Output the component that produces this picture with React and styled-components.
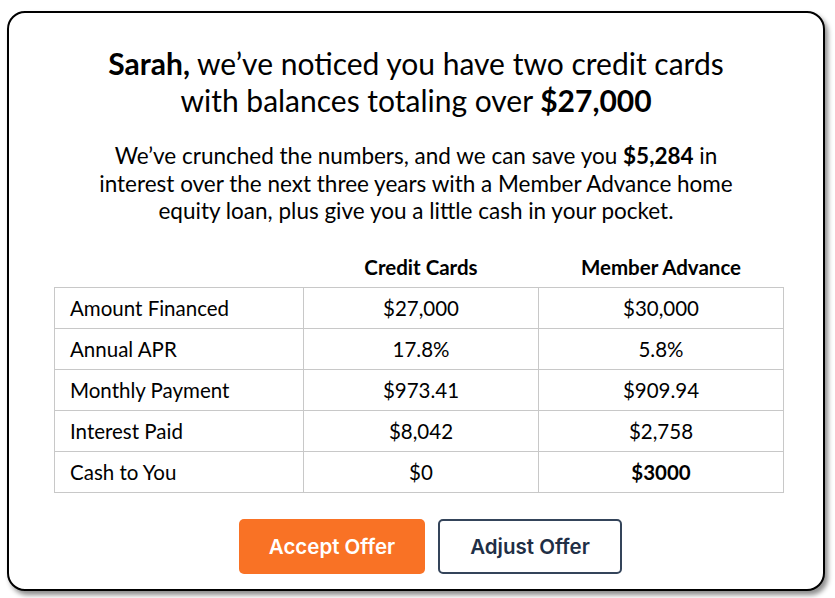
import React from "react";
import styled, { createGlobalStyle } from "styled-components";

const GlobalStyle = createGlobalStyle`
  html, body {
    margin: 0;
    padding: 0;
    background: #fff;
  }
`;

const rows = [
  { label: "Amount Financed", cards: "$27,000", advance: "$30,000" },
  { label: "Annual APR", cards: "17.8%", advance: "5.8%" },
  { label: "Monthly Payment", cards: "$973.41", advance: "$909.94" },
  { label: "Interest Paid", cards: "$8,042", advance: "$2,758" },
  { label: "Cash to You", cards: "$0", advance: "$3000", strong: true },
];

function App() {
  return (
    <Page>
      <GlobalStyle />
      <Card>
        <Title>
          <b>Sarah,</b> we’ve noticed you have two credit cards
          <br />
          with balances totaling over <b>$27,000</b>
        </Title>
        <Lead>
          We’ve crunched the numbers, and we can save you <b>$5,284</b> in
          <br />
          interest over the next three years with a Member Advance home
          <br />
          equity loan, plus give you a little cash in your pocket.
        </Lead>
        <Table>
          <thead>
            <tr>
              <HeadCell />
              <HeadCell>Credit Cards</HeadCell>
              <HeadCell>Member Advance</HeadCell>
            </tr>
          </thead>
          <tbody>
            {rows.map((r) => (
              <tr key={r.label}>
                <LabelCell>{r.label}</LabelCell>
                <ValueCell>{r.cards}</ValueCell>
                <ValueCell $strong={r.strong}>{r.advance}</ValueCell>
              </tr>
            ))}
          </tbody>
        </Table>
        <Actions>
          <PrimaryButton>Accept Offer</PrimaryButton>
          <OutlineButton>Adjust Offer</OutlineButton>
        </Actions>
      </Card>
    </Page>
  );
}

const Page = styled.div`
  padding: 11px 0 0 7px;
  width: 835px;
  height: 598px;
  box-sizing: border-box;
`;

const Card = styled.div`
  width: 818px;
  height: 580px;
  box-sizing: border-box;
  border: 2px solid #000;
  border-radius: 18px;
  background: #fff;
  box-shadow: 3px 4px 5px rgba(0, 0, 0, 0.45);
  padding-top: 32px;
  display: flex;
  flex-direction: column;
  font-family: Lato, "Open Sans", sans-serif;
  color: #000;
`;

const Title = styled.h1`
  margin: 0;
  font-size: 30px;
  line-height: 37px;
  font-weight: 400;
  text-align: center;

  b {
    font-weight: 700;
  }
`;

const Lead = styled.p`
  margin: 23px 0 0;
  font-size: 22.5px;
  line-height: 27.5px;
  text-align: center;

  b {
    font-weight: 700;
  }
`;

const Table = styled.table`
  margin: 22px 0 0 45px;
  width: 730px;
  border-collapse: collapse;
  table-layout: fixed;
  font-size: 20.5px;
`;

const HeadCell = styled.th`
  height: 40px;
  font-weight: 700;
  text-align: center;
  padding: 0;

  &:first-child {
    width: 249px;
  }
  &:nth-child(2) {
    width: 235px;
  }
`;

const LabelCell = styled.td`
  height: 40px;
  border: 1px solid #c8c8c8;
  padding: 0 0 0 15px;
`;

const ValueCell = styled.td`
  height: 40px;
  border: 1px solid #c8c8c8;
  text-align: center;
  padding: 0;
  font-weight: ${(p) => (p.$strong ? 700 : 400)};
`;

const Actions = styled.div`
  margin-top: 26px;
  padding-left: 29px;
  display: flex;
  justify-content: center;
  gap: 13px;
`;

const BaseButton = styled.button`
  height: 55px;
  border-radius: 5px;
  font-family: Inter, "Open Sans", sans-serif;
  font-size: 20.5px;
  font-weight: 600;
  cursor: pointer;
  box-sizing: border-box;
`;

const PrimaryButton = styled(BaseButton)`
  width: 186px;
  background: #f97225;
  color: #fff;
  border: none;
`;

const OutlineButton = styled(BaseButton)`
  width: 184px;
  background: #fff;
  color: #1f2f46;
  border: 2px solid #34445a;
`;

export default App;
